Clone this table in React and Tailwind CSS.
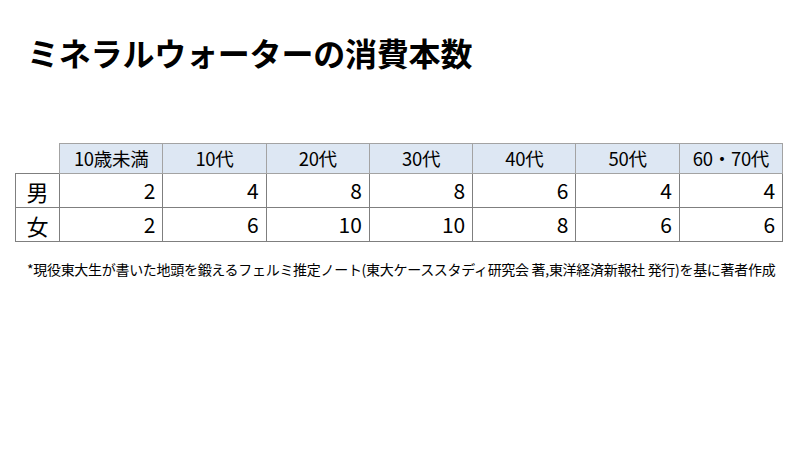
import React from 'react';

const headers = ['10歳未満', '10代', '20代', '30代', '40代', '50代', '60・70代'];
const rows = [
  { label: '男', values: [2, 4, 8, 8, 6, 4, 4] },
  { label: '女', values: [2, 6, 10, 10, 8, 6, 6] },
];

const font = { fontFamily: '"Noto Sans CJK JP", "Noto Sans", sans-serif' };

const App = () => {
  return (
    <div className="w-[800px] h-[450px] bg-white text-black overflow-hidden" style={font}>
      <h1 className="pl-[27px] pt-[36px] text-[32px] leading-none font-bold tracking-[-0.2px]">
        ミネラルウォーターの消費本数
      </h1>

      <table className="ml-[15px] mt-[75px] border-collapse table-fixed">
        <colgroup>
          <col className="w-[44px]" />
          {headers.map((h) => (
            <col key={h} className="w-[103.3px]" />
          ))}
        </colgroup>
        <thead>
          <tr className="h-[30px]">
            <th className="p-0"></th>
            {headers.map((h) => (
              <th
                key={h}
                className="p-0 bg-[#dde7f3] border border-[#a3a3a3] text-[18.5px] font-normal text-center leading-none tracking-[-0.3px]"
              >
                {h}
              </th>
            ))}
          </tr>
        </thead>
        <tbody>
          {rows.map((row) => (
            <tr key={row.label} className="h-[34px]">
              <td className="p-0 border border-[#7f7f7f] text-[22px] text-center leading-none">
                {row.label}
              </td>
              {row.values.map((v, i) => (
                <td
                  key={i}
                  className="p-0 pr-[7px] border border-[#7f7f7f] text-[21px] text-right leading-none"
                >
                  {v}
                </td>
              ))}
            </tr>
          ))}
        </tbody>
      </table>

      <p className="pl-[27px] mt-[20px] text-[14px] leading-none tracking-[-0.3px] whitespace-nowrap">
        *現役東大生が書いた地頭を鍛えるフェルミ推定ノート(東大ケーススタディ研究会 著,東洋経済新報社 発行)を基に著者作成
      </p>
    </div>
  );
};

export default App;
